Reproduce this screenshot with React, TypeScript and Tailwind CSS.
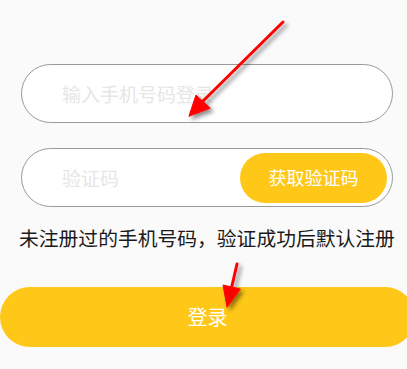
import React from 'react';

const font = { fontFamily: '"Noto Sans CJK SC", "Noto Sans", sans-serif' };

const Arrows: React.FC = () => (
  <svg className="absolute inset-0 pointer-events-none" width="407" height="369" viewBox="0 0 407 369">
    <defs>
      <filter id="sh" x="-20%" y="-20%" width="140%" height="140%">
        <feDropShadow dx="3" dy="3" stdDeviation="2" floodColor="#000" floodOpacity="0.45" />
      </filter>
    </defs>
    <g filter="url(#sh)" fill="#f00" stroke="#f00" strokeLinecap="round" strokeLinejoin="round">
      <line x1="283" y1="22" x2="200" y2="104" strokeWidth="3" />
      <polygon points="189,116 196,95 210,108" strokeWidth="1" />
      <line x1="237" y1="264" x2="231" y2="290" strokeWidth="3" />
      <polygon points="227,307 223,285 240,289" strokeWidth="1" />
    </g>
  </svg>
);

export default function App() {
  return (
    <div className="relative w-full h-[369px] bg-[#fafafa] overflow-hidden" style={font}>
      <div className="flex flex-col pt-[64px]">
        <div className="ml-[21px] mr-[14px] h-[59px] rounded-full border border-[#9a9a9a] bg-white flex items-center pl-[40px]">
          <span className="text-[19px] text-[#e6e6e6] leading-none">输入手机号码登录</span>
        </div>
        <div className="mt-[25px] ml-[21px] mr-[14px] h-[59px] rounded-full border border-[#9a9a9a] bg-white flex items-center pl-[40px] pr-[5px]">
          <span className="flex-1 text-[19px] text-[#e6e6e6] leading-none">验证码</span>
          <button className="w-[147px] h-[50px] rounded-full bg-[#ffc818] text-white text-[18px] flex items-center justify-center">
            获取验证码
          </button>
        </div>
        <p className="mt-[17px] h-[28px] pl-[19px] text-[19.8px] leading-[28px] text-[#1a1a1a] whitespace-nowrap">
          未注册过的手机号码，验证成功后默认注册
        </p>
        <button className="mt-[35px] h-[60px] w-[415px] rounded-full bg-[#ffc818] text-white text-[20px] flex items-center justify-center">
          登录
        </button>
      </div>
      <Arrows />
    </div>
  );
}
